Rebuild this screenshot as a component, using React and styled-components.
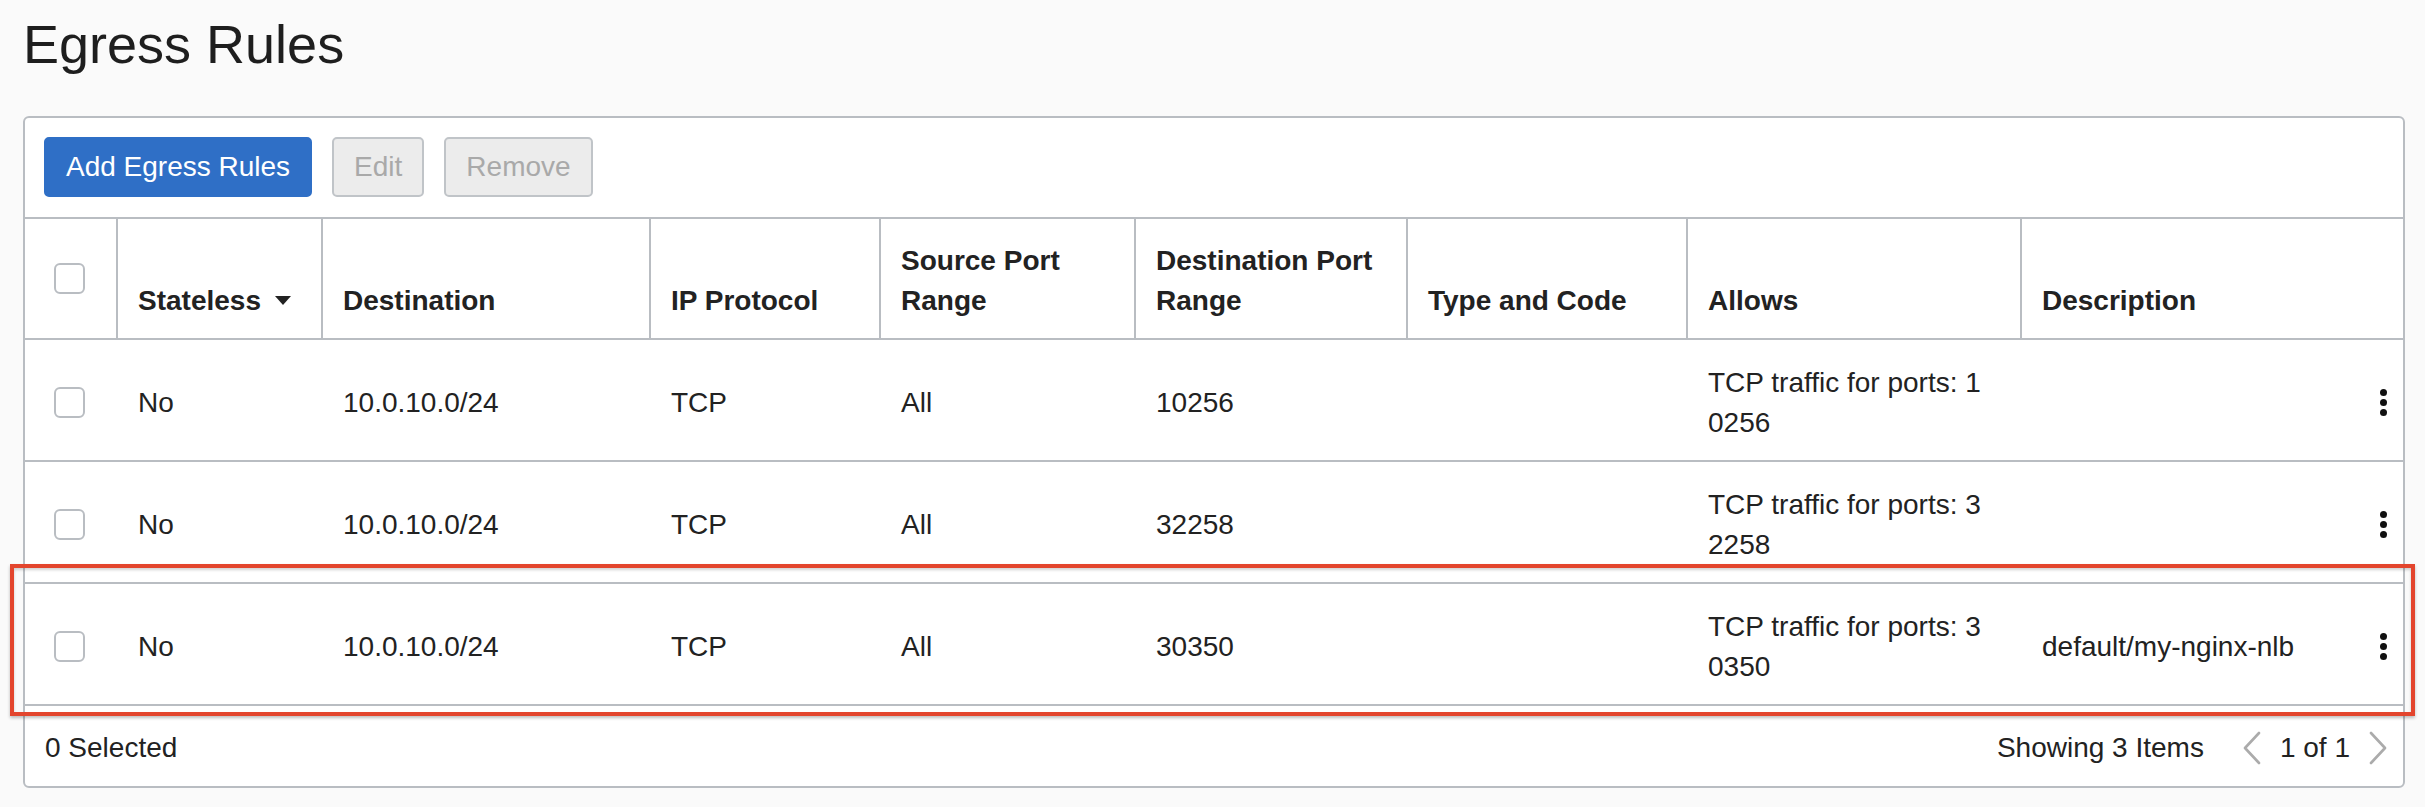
import React from "react";
import styled, { createGlobalStyle, css } from "styled-components";

const LINE = "#b9bdc2";

const GlobalStyle = createGlobalStyle`
  html, body { margin: 0; padding: 0; background: #fafafa; }
  body { font-family: "Liberation Sans", Arial, Helvetica, sans-serif; color: #222; }
  *, *::before, *::after { box-sizing: border-box; }
`;

const Page = styled.div`
  padding: 13px 20px 0 23px;
`;

const Title = styled.h1`
  margin: 0 0 41px;
  font-size: 54px;
  font-weight: 400;
  line-height: 62px;
  color: #1e1e1e;
`;

const PanelWrap = styled.div`
  position: relative;
`;

const Panel = styled.section`
  background: #fff;
  border: 2px solid ${LINE};
  border-radius: 6px;
  overflow: hidden;
`;

const Toolbar = styled.div`
  display: flex;
  gap: 20px;
  padding: 19px 19px 20px;
`;

const Button = styled.button`
  height: 60px;
  padding: 0 20px;
  border: 2px solid;
  border-radius: 5px;
  font-family: inherit;
  font-size: 28px;
  line-height: 1;
  ${(p) =>
    p.$primary
      ? css`
          background: #2f6fc6;
          border-color: #2f6fc6;
          color: #fff;
        `
      : css`
          background: #ececec;
          border-color: #c0c4c8;
          color: #a9a9a9;
        `}
`;

const Table = styled.table`
  width: 100%;
  table-layout: fixed;
  border-collapse: separate;
  border-spacing: 0;
`;

const Col = styled.col`
  width: ${(p) => p.$w}px;
`;

const HeadRow = styled.tr`
  height: 123px;
`;

const BodyRow = styled.tr`
  height: 122px;
`;

const Th = styled.th`
  padding: 0 20px 17px;
  text-align: left;
  vertical-align: bottom;
  font-size: 28px;
  font-weight: 700;
  line-height: 40px;
  color: #222;
  border-top: 2px solid ${LINE};
  border-bottom: 2px solid ${LINE};
  border-left: 2px solid ${LINE};
`;

const CheckTh = styled(Th)`
  border-left: none;
  vertical-align: middle;
  padding: 0 0 0 29px;
`;

const Td = styled.td`
  padding: 6px ${(p) => p.$pr ?? 22}px 0 22px;
  vertical-align: middle;
  font-size: 28px;
  line-height: 40px;
  color: #222;
  border-bottom: 2px solid ${LINE};
  word-break: break-all;
`;

const CheckTd = styled(Td)`
  padding: 5px 0 0 29px;
`;

const ActionTd = styled(Td)`
  padding: 5px 16px 0 0;
`;

const Checkbox = styled.span`
  display: block;
  width: 31px;
  height: 31px;
  border: 2px solid ${LINE};
  border-radius: 6px;
  background: #fff;
`;

const SortArrow = styled.svg`
  margin-left: 14px;
  vertical-align: 5px;
`;

const Kebab = styled.span`
  display: flex;
  flex-direction: column;
  gap: 3px;
  width: 7px;
  margin-left: auto;
`;

const Dot = styled.span`
  width: 7px;
  height: 7px;
  border-radius: 50%;
  background: #111;
`;

const Footer = styled.div`
  display: flex;
  align-items: center;
  justify-content: space-between;
  height: 80px;
  padding: 4px 15px 0 20px;
  font-size: 28px;
  color: #222;
`;

const Pager = styled.div`
  display: flex;
  align-items: center;
`;

const Showing = styled.span`
  margin-right: 38px;
`;

const PageNum = styled.span`
  margin: 0 18px;
`;

const Chevron = styled.svg`
  display: block;
`;

const Highlight = styled.div`
  position: absolute;
  left: -13px;
  top: 448px;
  width: 2405px;
  height: 152px;
  border: 4px solid #e3452d;
  pointer-events: none;
  box-shadow: 0 2px 3px rgba(0, 0, 0, 0.25), inset 0 2px 3px rgba(0, 0, 0, 0.18);
`;

const widths = [91, 205, 328, 230, 255, 272, 280, 334, 333, 50];

const rows = [
  { port: "10256", desc: "" },
  { port: "32258", desc: "" },
  { port: "30350", desc: "default/my-nginx-nlb" },
];

function ChevronIcon({ dir }) {
  const d = dir === "left" ? "M17 2 L3 17 L17 32" : "M3 2 L17 17 L3 32";
  return (
    <Chevron width="20" height="34" viewBox="0 0 20 34">
      <path d={d} fill="none" stroke="#ababab" strokeWidth="2.6" strokeLinecap="round" strokeLinejoin="round" />
    </Chevron>
  );
}

export default function App() {
  return (
    <>
      <GlobalStyle />
      <Page>
        <Title>Egress Rules</Title>
        <PanelWrap>
          <Panel>
            <Toolbar>
              <Button $primary>Add Egress Rules</Button>
              <Button disabled>Edit</Button>
              <Button disabled>Remove</Button>
            </Toolbar>
            <Table>
              <colgroup>
                {widths.map((w, i) => (
                  <Col key={i} $w={w} />
                ))}
              </colgroup>
              <thead>
                <HeadRow>
                  <CheckTh>
                    <Checkbox />
                  </CheckTh>
                  <Th>
                    Stateless
                    <SortArrow width="16" height="9" viewBox="0 0 16 9">
                      <polygon points="0,0 16,0 8,9" fill="#222" />
                    </SortArrow>
                  </Th>
                  <Th>Destination</Th>
                  <Th>IP Protocol</Th>
                  <Th>Source Port Range</Th>
                  <Th>Destination Port Range</Th>
                  <Th>Type and Code</Th>
                  <Th>Allows</Th>
                  <Th colSpan={2}>Description</Th>
                </HeadRow>
              </thead>
              <tbody>
                {rows.map((r) => (
                  <BodyRow key={r.port}>
                    <CheckTd>
                      <Checkbox />
                    </CheckTd>
                    <Td>No</Td>
                    <Td>10.0.10.0/24</Td>
                    <Td>TCP</Td>
                    <Td>All</Td>
                    <Td>{r.port}</Td>
                    <Td></Td>
                    <Td $pr={30}>TCP traffic for ports: {r.port}</Td>
                    <Td>{r.desc}</Td>
                    <ActionTd>
                      <Kebab>
                        <Dot />
                        <Dot />
                        <Dot />
                      </Kebab>
                    </ActionTd>
                  </BodyRow>
                ))}
              </tbody>
            </Table>
            <Footer>
              <span>0 Selected</span>
              <Pager>
                <Showing>Showing 3 Items</Showing>
                <ChevronIcon dir="left" />
                <PageNum>1 of 1</PageNum>
                <ChevronIcon dir="right" />
              </Pager>
            </Footer>
          </Panel>
          <Highlight />
        </PanelWrap>
      </Page>
    </>
  );
}
